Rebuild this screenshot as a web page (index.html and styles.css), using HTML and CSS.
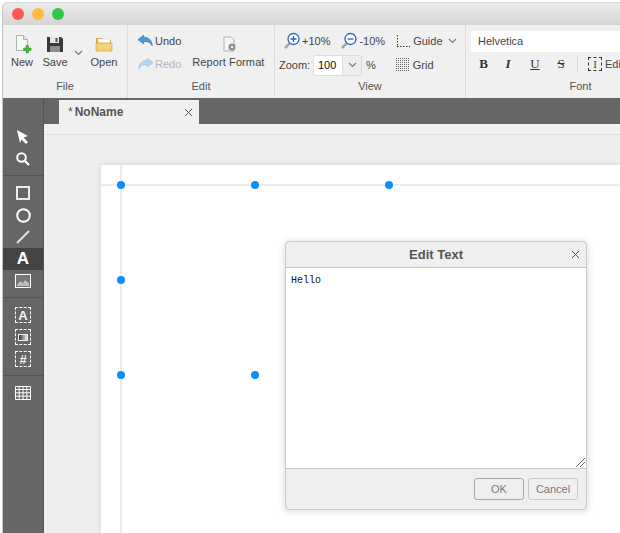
FILE: index.html
```html
<!DOCTYPE html>
<html lang="en">
  <head>
    <meta charset="utf-8" />
    <meta name="viewport" content="width=device-width, initial-scale=1" />
    <title>Report Designer</title>
    <link rel="stylesheet" href="styles.css">
  </head>
  <body>
    <div class="window">
      <div class="titlebar">
        <span class="light red"></span>
        <span class="light yellow"></span>
        <span class="light green"></span>
      </div>

      <!-- ribbon -->
      <div class="ribbon">
        <div class="group group-file">
          <div class="group-body">
            <div class="tool tool-new">
              <svg width="20" height="20" viewBox="0 0 20 20"><path d="M4.500 1.500h7l4 4v11h-11z" fill="#f6f8f6" stroke="#a9b4b4"/><path d="M11.500 1.500v4h4" fill="#dfe6e6" stroke="#a9b4b4"/><path d="M11.500 14h2.500v-2.500h2.500v2.500h2.500v2.500h-2.500v2.500h-2.500v-2.500h-2.500z" fill="#3fb83f" stroke="#2c8f2c" stroke-width=".5"/></svg>
              <span>New</span>
            </div>
            <div class="tool tool-save">
              <svg width="20" height="20" viewBox="0 0 20 20"><path d="M2 3h14l2 2v13H2z" fill="#3a3a3a"/><rect x="5" y="3" width="9" height="6" fill="#e4e4e4"/><rect x="5" y="12" width="10" height="6" fill="#8c8c8c"/><rect x="10.500" y="4" width="2" height="4" fill="#555"/></svg>
              <span>Save</span>
            </div>
            <svg class="chev chev-save" width="9" height="6" viewBox="0 0 9 6"><path d="M1 1l3.500 3.500L8 1" fill="none" stroke="#777" stroke-width="1.100"/></svg>
            <div class="tool tool-open">
              <svg width="20" height="20" viewBox="0 0 20 20"><path d="M2 4h6l2 2h7v4H2z" fill="#dca93f"/><rect x="4" y="5" width="12" height="5" fill="#fff" stroke="#ccc" stroke-width=".5"/><path d="M2 9h16v8H2z" fill="#f5d27a" stroke="#d2a548" stroke-width=".8"/></svg>
              <span>Open</span>
            </div>
          </div>
          <div class="group-label">File</div>
        </div>

        <div class="group group-edit">
          <div class="group-body">
            <div class="stack">
              <div class="row-item">
                <svg width="17" height="14" viewBox="0 0 18 14"><path d="M7 1L1 5.500 7 10V7.500c4 0 7 .5 9 4.500 0-6-4-9-9-9z" fill="#4a9be0" stroke="#2467a8" stroke-width=".7"/></svg>
                <span>Undo</span>
              </div>
              <div class="row-item disabled">
                <svg width="17" height="14" viewBox="0 0 18 14"><path d="M11 1l6 4.500L11 10V7.500c-4 0-7 .5-9 4.500 0-6 4-9 9-9z" fill="#b4d4ee" stroke="#9cc0de" stroke-width=".7"/></svg>
                <span>Redo</span>
              </div>
            </div>
            <div class="tool tool-format">
              <svg width="20" height="20" viewBox="0 0 20 20"><path d="M4 3h7l3 3v11H4z" fill="#f4f6f6" stroke="#a9b0b0"/><circle cx="12" cy="13" r="3.500" fill="#8d8d8d"/><circle cx="12" cy="13" r="1.300" fill="#eee"/></svg>
              <span>Report Format</span>
            </div>
          </div>
          <div class="group-label">Edit</div>
        </div>

        <div class="group group-view">
          <div class="group-body view-body">
            <div class="view-row">
              <div class="row-item zoom-in">
                <svg width="18" height="18" viewBox="0 0 18 18"><path d="M7 11L2 16" stroke="#a8a8a8" stroke-width="2.500"/><circle cx="10.500" cy="7" r="5.500" fill="#fff" stroke="#2c5fc0" stroke-width="1.300"/><path d="M7.500 7h6M10.500 4v6" stroke="#2c5fc0" stroke-width="1.300"/></svg>
                <span>+10%</span>
              </div>
              <div class="row-item zoom-out">
                <svg width="18" height="18" viewBox="0 0 18 18"><path d="M7 11L2 16" stroke="#a8a8a8" stroke-width="2.500"/><circle cx="10.500" cy="7" r="5.500" fill="#fff" stroke="#2c5fc0" stroke-width="1.300"/><path d="M7.500 7h6" stroke="#2c5fc0" stroke-width="1.300"/></svg>
                <span>-10%</span>
              </div>
              <div class="row-item guide">
                <svg width="14" height="14" viewBox="0 0 14 14"><path d="M1.500 1v12M1 12.500h13" stroke="#333" stroke-dasharray="1.500 1.500" fill="none"/></svg>
                <span>Guide</span>
                <svg class="chev" width="9" height="6" viewBox="0 0 9 6"><path d="M1 1l3.500 3.500L8 1" fill="none" stroke="#777" stroke-width="1.100"/></svg>
              </div>
            </div>
            <div class="view-row">
              <span class="zoom-label">Zoom:</span>
              <div class="zoom-box">
                <span class="zoom-value">100</span>
                <span class="zoom-arrow"><svg width="9" height="6" viewBox="0 0 9 6"><path d="M1 1l3.500 3.500L8 1" fill="none" stroke="#777" stroke-width="1.100"/></svg></span>
              </div>
              <span class="percent">%</span>
              <div class="row-item grid-tool">
                <svg width="14" height="14" viewBox="0 0 14 14"><path d="M0 .5h14M0 2.500h14M0 4.500h14M0 6.500h14M0 8.500h14M0 10.500h14M0 12.500h14" stroke="#666" stroke-dasharray="1 1" fill="none"/></svg>
                <span>Grid</span>
              </div>
            </div>
          </div>
          <div class="group-label">View</div>
        </div>

        <div class="group group-font">
          <div class="group-body font-body">
            <div class="font-name">Helvetica</div>
            <div class="font-row">
              <span class="fmt fmt-b">B</span>
              <span class="fmt fmt-i">I</span>
              <span class="fmt fmt-u">U</span>
              <span class="fmt fmt-s">S</span>
              <span class="fmt-sep"></span>
              <span class="edit-icon">I</span>
              <span>Edit</span>
            </div>
          </div>
          <div class="group-label">Font</div>
        </div>
      </div>

      <div class="workspace">
        <!-- tool palette -->
        <div class="palette">
          <div class="palette-group first">
            <div class="pal-item">
              <svg width="14" height="14" viewBox="0 0 14 14"><path d="M1 0l11 6-4.500 1.500L12 12l-2 2-4.500-4.500L4 13z" fill="#fff"/></svg>
            </div>
            <div class="pal-item">
              <svg width="14" height="14" viewBox="0 0 14 14"><circle cx="5.500" cy="5.500" r="4.300" fill="none" stroke="#fff" stroke-width="2"/><path d="M8.500 8.500l4.500 4.500" stroke="#fff" stroke-width="2.200"/></svg>
            </div>
          </div>
          <div class="palette-group">
            <div class="pal-item">
              <svg width="14" height="14" viewBox="0 0 14 14"><rect x="1" y="1" width="12" height="12" fill="none" stroke="#ececec" stroke-width="2"/></svg>
            </div>
            <div class="pal-item">
              <svg width="15" height="15" viewBox="0 0 15 15"><circle cx="7.500" cy="7.500" r="6.300" fill="none" stroke="#fff" stroke-width="2"/></svg>
            </div>
            <div class="pal-item">
              <svg width="14" height="14" viewBox="0 0 14 14"><path d="M1 13L13 1" stroke="#e6e6e6" stroke-width="2"/></svg>
            </div>
            <div class="pal-item active"><span class="pal-a">A</span></div>
            <div class="pal-item">
              <svg width="16" height="14" viewBox="0 0 16 14"><rect x=".5" y=".5" width="15" height="13" fill="#777" stroke="#fff"/><path d="M2 11l3-4 3 2 2-3 4 3v3H2z" fill="#bbb"/></svg>
            </div>
          </div>
          <div class="palette-group">
            <div class="pal-item"><span class="pal-box">A</span></div>
            <div class="pal-item">
              <span class="pal-box"><span class="pal-img"></span></span>
            </div>
            <div class="pal-item"><span class="pal-box">#</span></div>
          </div>
          <div class="palette-group last">
            <div class="pal-item">
              <svg width="16" height="14" viewBox="0 0 16 14"><path d="M.5.500h15v13H.500zM.500 3.500h15M.500 6.800h15M.500 10.200h15M4.200.500v13M8 .500v13M11.800.500v13" fill="none" stroke="#fff"/></svg>
            </div>
          </div>
        </div>

        <div class="main">
          <div class="tabbar">
            <div class="tab">
              <span class="tab-name"><span class="tab-star">*</span>NoName</span>
              <svg width="7" height="7" viewBox="0 0 7 7"><path d="M0 0l7 7M7 0L0 7" stroke="#555" fill="none"/></svg>
            </div>
          </div>
          <div class="ruler"></div>
          <div class="canvas">
            <div class="page">
              <span class="guide-v"></span>
              <span class="guide-h"></span>
              <span class="handle h1"></span>
              <span class="handle h2"></span>
              <span class="handle h3"></span>
              <span class="handle h4"></span>
              <span class="handle h5"></span>
              <span class="handle h6"></span>
            </div>
          </div>
        </div>
      </div>

      <!-- edit text dialog -->
      <div class="dialog">
        <div class="dialog-head">
          <span class="dialog-title">Edit Text</span>
          <svg class="dialog-close" width="7" height="7" viewBox="0 0 7 7"><path d="M0 0l7 7M7 0L0 7" stroke="#555" fill="none"/></svg>
        </div>
        <div class="dialog-text">
          Hello
          <svg class="grip" width="9" height="9" viewBox="0 0 9 9"><path d="M0 9l9-9M4 9l5-5" stroke="#666" fill="none"/></svg>
        </div>
        <div class="dialog-foot">
          <button class="btn btn-ok">OK</button>
          <button class="btn btn-cancel">Cancel</button>
        </div>
      </div>
    </div>
  </body>
</html>
```

FILE: styles.css
```css
html,
body {
  height: 100%;
}

body {
  margin: 0;
  background: #fff;
  overflow: hidden;
  font-family: "Liberation Sans", Arial, sans-serif;
  font-size: 11px;
  color: #444;
}

.window {
  position: relative;
  height: 100%;
  margin-left: 2px;
  box-sizing: border-box;
  padding-top: 2px;
  display: flex;
  flex-direction: column;
  overflow: hidden;
}

.titlebar {
  flex: none;
  height: 23px;
  display: flex;
  align-items: center;
  gap: 8px;
  padding-left: 9px;
  background: linear-gradient(#ececec, #d4d4d4);
  border-top: 1px solid #d8d8d8;
  border-left: 1px solid #c4c4c4;
  border-radius: 5px 0 0 0;
  box-sizing: border-box;
}

.light {
  width: 12px;
  height: 12px;
  border-radius: 50%;
}

.red {
  background: #fc5753;
}

.yellow {
  background: #fdbc40;
}

.green {
  background: #33c748;
}

.ribbon {
  flex: none;
  height: 73px;
  display: flex;
  background: #f0f0f0;
  border-left: 1px solid #c4c4c4;
  overflow: hidden;
}

.group {
  flex: none;
  display: flex;
  flex-direction: column;
  border-right: 1px solid #dcdcdc;
  box-sizing: border-box;
}

.group-file {
  width: 125px;
}

.group-edit {
  width: 147px;
}

.group-view {
  width: 191px;
}

.group-font {
  width: 230px;
}

.group-body {
  flex: 1;
  display: flex;
  min-height: 0;
}

.group-label {
  flex: none;
  height: 22px;
  line-height: 20px;
  text-align: center;
  color: #555;
}

.tool {
  display: flex;
  flex-direction: column;
  align-items: center;
  padding-top: 9px;
  color: #444;
}

.tool span {
  margin-top: 1px;
  line-height: 14px;
}

.group-file .group-body {
  padding-left: 8px;
}

.tool-new {
  width: 22px;
}

.tool-save {
  width: 24px;
  margin-left: 10px;
}

.chev-save {
  margin: 25px 0 0 7px;
}

.tool-open {
  width: 24px;
  margin-left: 9px;
}

.stack {
  display: flex;
  flex-direction: column;
  padding: 4px 0 0 9px;
}

.row-item {
  height: 24px;
  display: flex;
  align-items: center;
  gap: 1px;
}

.disabled {
  color: #b5b5b5;
}

.tool-format {
  margin-left: 11px;
}

.tool-format span {
  letter-spacing: 0.1px;
}

.tool-format svg {
  margin-left: 3px;
}

.view-body {
  flex-direction: column;
  padding-top: 4px;
}

.view-row {
  height: 24px;
  display: flex;
  align-items: center;
}

.zoom-in {
  margin-left: 8px;
}

.zoom-out {
  margin-left: 10px;
}

.guide {
  margin-left: 11px;
  gap: 3px;
}

.guide .chev {
  margin-left: 2px;
}

.zoom-label {
  margin-left: 4px;
  width: 34px;
}

.zoom-box {
  width: 49px;
  height: 21px;
  display: flex;
  background: #fff;
  border: 1px solid #ddd;
  border-radius: 2px;
  box-sizing: border-box;
}

.zoom-value {
  flex: 1;
  line-height: 19px;
  padding-left: 4px;
  color: #111;
}

.zoom-arrow {
  width: 18px;
  display: flex;
  align-items: center;
  justify-content: center;
  background: #eee;
  border-left: 1px solid #ddd;
}

.percent {
  margin-left: 4px;
}

.grid-tool {
  margin-left: 20px;
  gap: 3px;
}

.font-body {
  flex-direction: column;
  padding: 6px 0 0 5px;
}

.font-name {
  height: 21px;
  line-height: 21px;
  padding-left: 7px;
  background: #fff;
  border-radius: 2px;
}

.font-row {
  height: 27px;
  display: flex;
  align-items: center;
}

.fmt {
  width: 26px;
  text-align: center;
  font-family: "Liberation Serif", serif;
  font-size: 13px;
  color: #333;
}

.fmt-b {
  font-weight: bold;
  width: 25px;
}

.fmt-i {
  font-style: italic;
  font-weight: bold;
  width: 24px;
}

.fmt-u {
  text-decoration: underline;
  margin-left: 2px;
}

.fmt-s {
  text-decoration: line-through;
  margin-right: 1px;
}

.fmt-sep {
  width: 1px;
  height: 16px;
  margin: 0 10px 0 2px;
  background: #d8d8d8;
}

.edit-icon {
  width: 12px;
  height: 12px;
  margin-right: 3px;
  border: 1px dashed #333;
  text-align: center;
  line-height: 12px;
  font-family: "Liberation Serif", serif;
}

.workspace {
  flex: 1;
  min-height: 0;
  display: flex;
}

.palette {
  flex: none;
  width: 42px;
  background: #666;
  border-right: 1px solid #555;
  border-left: 1px solid #c4c4c4;
  box-sizing: border-box;
}

.palette-group {
  padding: 6px 0 5px;
  border-bottom: 1px solid #555;
}

.palette-group.first {
  padding-top: 28px;
}

.palette-group.last {
  border-bottom: 0;
}

.pal-item {
  height: 22px;
  display: flex;
  align-items: center;
  justify-content: center;
}

.pal-item.active {
  background: #444;
}

.pal-a {
  font-size: 17px;
  font-weight: bold;
  color: #fff;
}

.pal-box {
  width: 14px;
  height: 14px;
  display: flex;
  align-items: center;
  justify-content: center;
  border: 1px dashed #fff;
  font-size: 13px;
  font-weight: bold;
  color: #f2f2f2;
}

.pal-img {
  width: 10px;
  height: 7px;
  background: linear-gradient(90deg, #333, #eee);
  border: 1px solid #eee;
  box-sizing: border-box;
}

.main {
  flex: 1;
  min-width: 0;
  display: flex;
  flex-direction: column;
}

.tabbar {
  flex: none;
  height: 26px;
  box-sizing: border-box;
  padding: 2px 0 0 15px;
  background: #666;
}

.tab {
  width: 140px;
  height: 24px;
  display: flex;
  align-items: center;
  justify-content: space-between;
  padding: 0 7px 0 9px;
  background: #f0f0f0;
  box-sizing: border-box;
}

.tab-name {
  font-size: 12px;
  font-weight: bold;
  color: #555;
}

.tab-star {
  margin-right: 2px;
  font-weight: normal;
}

.ruler {
  flex: none;
  height: 11px;
  background: #f0f0f0;
  border-bottom: 1px solid #ddd;
  box-sizing: border-box;
}

.canvas {
  flex: 1;
  min-height: 0;
  display: flex;
  padding: 30px 0 0 57px;
  background: #eee;
  overflow: hidden;
}

.page {
  flex: 1;
  position: relative;
  background: #fff;
  box-shadow: 0 0 6px rgba(0, 0, 0, 0.12);
}

.guide-v {
  position: absolute;
  left: 19px;
  top: 0;
  bottom: 0;
  width: 2px;
  background: #ebebeb;
}

.guide-h {
  position: absolute;
  left: 0;
  right: 0;
  top: 19px;
  height: 2px;
  background: #ebebeb;
}

.handle {
  position: absolute;
  width: 8px;
  height: 8px;
  border-radius: 50%;
  background: #0a8fff;
}

.h1 {
  left: 16px;
  top: 16px;
}

.h2 {
  left: 150px;
  top: 16px;
}

.h3 {
  left: 284px;
  top: 16px;
}

.h4 {
  left: 16px;
  top: 111px;
}

.h5 {
  left: 16px;
  top: 206px;
}

.h6 {
  left: 150px;
  top: 206px;
}

.dialog {
  position: absolute;
  left: 283px;
  top: 241px;
  width: 302px;
  height: 269px;
  display: flex;
  flex-direction: column;
  box-sizing: border-box;
  background: #efefef;
  border: 1px solid #c8c8c8;
  border-radius: 4px;
  box-shadow: 0 1px 8px rgba(0, 0, 0, 0.16);
}

.dialog-head {
  flex: none;
  height: 26px;
  display: flex;
  align-items: center;
  justify-content: center;
  position: relative;
  box-sizing: border-box;
  border-bottom: 1px solid #c8c8c8;
}

.dialog-title {
  font-size: 13px;
  font-weight: bold;
  color: #555;
}

.dialog-close {
  position: absolute;
  right: 7px;
  top: 9px;
}

.dialog-text {
  flex: 1;
  position: relative;
  padding: 6px 5px;
  background: #fff;
  font-family: "Liberation Mono", monospace;
  font-size: 10px;
  line-height: 13px;
  color: #111;
}

.grip {
  position: absolute;
  right: 1px;
  bottom: 1px;
}

.dialog-foot {
  flex: none;
  height: 41px;
  display: flex;
  align-items: center;
  justify-content: flex-end;
  gap: 4px;
  padding: 0 8px;
  border-top: 1px solid #c8c8c8;
  box-sizing: border-box;
}

.btn {
  width: 50px;
  height: 22px;
  padding: 0;
  background: #efefef;
  border: 1px solid #c8c8c8;
  border-radius: 3px;
  font-family: inherit;
  font-size: 11px;
  color: #777;
}

.btn-ok {
  border-color: #a8a8a8;
}
```
